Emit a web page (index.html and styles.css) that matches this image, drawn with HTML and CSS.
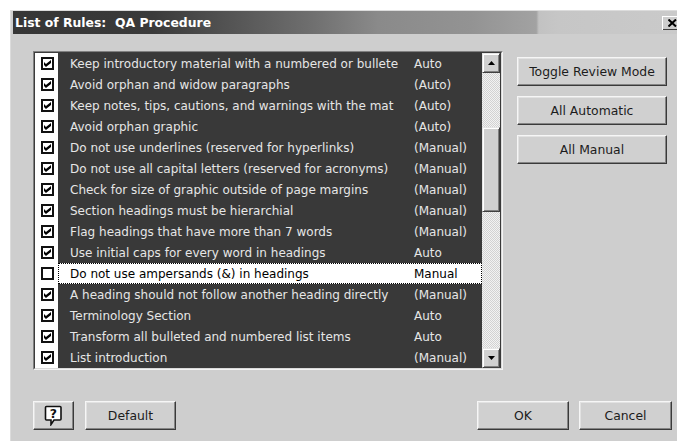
FILE: index.html
```html
<!DOCTYPE html>
<html lang="en">
<head>
<meta charset="utf-8">
<title>List of Rules: QA Procedure</title>
<link rel="stylesheet" href="styles.css">
</head>
<body>
<div class="window">
  <div class="titlebar">
    <span class="title">List of Rules:&nbsp; QA Procedure</span>
    <button class="close" aria-label="Close">
      <svg width="9" height="8" viewBox="0 0 9 8"><path d="M0.5 0.5 L8 7.5 M8 0.5 L0.5 7.5" stroke="#000" stroke-width="2" fill="none"/></svg>
    </button>
  </div>
  <div class="content">
    <div class="main">
      <div class="listbox">
        <div class="listbox-inner">
          <ul class="rows">
            <li class="row"><span class="cbcell"><span class="cb on"></span></span><div class="item"><span class="name">Keep introductory material with a numbered or bullete</span><span class="mode">Auto</span></div></li>
            <li class="row"><span class="cbcell"><span class="cb on"></span></span><div class="item"><span class="name">Avoid orphan and widow paragraphs</span><span class="mode">(Auto)</span></div></li>
            <li class="row"><span class="cbcell"><span class="cb on"></span></span><div class="item"><span class="name">Keep notes, tips, cautions, and warnings with the mat</span><span class="mode">(Auto)</span></div></li>
            <li class="row"><span class="cbcell"><span class="cb on"></span></span><div class="item"><span class="name">Avoid orphan graphic</span><span class="mode">(Auto)</span></div></li>
            <li class="row"><span class="cbcell"><span class="cb on"></span></span><div class="item"><span class="name">Do not use underlines (reserved for hyperlinks)</span><span class="mode">(Manual)</span></div></li>
            <li class="row"><span class="cbcell"><span class="cb on"></span></span><div class="item"><span class="name">Do not use all capital letters (reserved for acronyms)</span><span class="mode">(Manual)</span></div></li>
            <li class="row"><span class="cbcell"><span class="cb on"></span></span><div class="item"><span class="name">Check for size of graphic outside of page margins</span><span class="mode">(Manual)</span></div></li>
            <li class="row"><span class="cbcell"><span class="cb on"></span></span><div class="item"><span class="name">Section headings must be hierarchial</span><span class="mode">(Manual)</span></div></li>
            <li class="row"><span class="cbcell"><span class="cb on"></span></span><div class="item"><span class="name">Flag headings that have more than 7 words</span><span class="mode">(Manual)</span></div></li>
            <li class="row"><span class="cbcell"><span class="cb on"></span></span><div class="item"><span class="name">Use initial caps for every word in headings</span><span class="mode">Auto</span></div></li>
            <li class="row selected"><span class="cbcell"><span class="cb"></span></span><div class="item"><span class="name">Do not use ampersands (&amp;) in headings</span><span class="mode">Manual</span></div></li>
            <li class="row"><span class="cbcell"><span class="cb on"></span></span><div class="item"><span class="name">A heading should not follow another heading directly</span><span class="mode">(Manual)</span></div></li>
            <li class="row"><span class="cbcell"><span class="cb on"></span></span><div class="item"><span class="name">Terminology Section</span><span class="mode">Auto</span></div></li>
            <li class="row"><span class="cbcell"><span class="cb on"></span></span><div class="item"><span class="name">Transform all bulleted and numbered list items</span><span class="mode">Auto</span></div></li>
            <li class="row"><span class="cbcell"><span class="cb on"></span></span><div class="item"><span class="name">List introduction</span><span class="mode">(Manual)</span></div></li>
          </ul>
          <div class="scrollbar">
            <div class="sb-btn">
              <svg width="7" height="4" viewBox="0 0 7 4"><path d="M3.5 0 L7 4 L0 4 Z" fill="#000"/></svg>
            </div>
            <div class="sb-track">
              <div class="sb-thumb"></div>
            </div>
            <div class="sb-btn">
              <svg width="7" height="4" viewBox="0 0 7 4"><path d="M0 0 L7 0 L3.5 4 Z" fill="#000"/></svg>
            </div>
          </div>
        </div>
      </div>
      <div class="side">
        <button class="btn wide">Toggle Review Mode</button>
        <button class="btn wide">All Automatic</button>
        <button class="btn wide">All Manual</button>
      </div>
    </div>
    <div class="footer">
      <button class="btn help" aria-label="Help">
        <svg width="19" height="21" viewBox="0 0 19 21">
          <path d="M2.5 1.5 H16 Q17 1.5 17 2.5 V14 Q17 15 16 15 H10 L7 19.5 L7 15 H2.5 Q1.5 15 1.5 14 V2.5 Q1.5 1.5 2.5 1.5 Z" fill="#fff" stroke="#111" stroke-width="1.6"/>
          <text x="9.3" y="13" text-anchor="middle" class="help-q">?</text>
        </svg>
      </button>
      <button class="btn default">Default</button>
      <span class="spacer"></span>
      <button class="btn ok">OK</button>
      <button class="btn cancel">Cancel</button>
    </div>
  </div>
</div>
</body>
</html>
```

FILE: styles.css
```css
html, body {
  margin: 0;
  padding: 0;
  background: #fff;
  overflow: hidden;
}

body {
  font-family: "DejaVu Sans", "Liberation Sans", sans-serif;
  font-size: 12px;
}

/* dialog frame */
.window {
  margin: 10px 0 0 10px;
  height: 431px;
  box-sizing: border-box;
  border-top: 1px solid #dcdcdc;
  border-left: 1px solid #dcdcdc;
  padding-left: 2px;
  background: #cecece;
  overflow: hidden;
}

.titlebar {
  height: 23px;
  display: flex;
  align-items: center;
  padding-left: 2px;
  background: linear-gradient(90deg,
    #363636 0%, #3a3a3a 21%, #6f6f6f 45%, #8a8a8a 55%,
    #939393 69%, #a2a2a2 78.8%, #c2c2c2 79.2%, #c6c6c6 82%, #cacaca 100%);
}

.title {
  color: #fff;
  font-weight: bold;
  font-size: 12.4px;
  white-space: nowrap;
}

.close {
  margin-left: auto;
  width: 15px;
  height: 14px;
  padding: 0 0 0 5px;
  display: flex;
  align-items: center;
  justify-content: flex-start;
  background: #cdcdcd;
  border: none;
  border-left: 1px solid #fff;
  border-top: 1px solid #fff;
  box-shadow: inset 0 -1px #404040;
}

.content {
  padding: 17px 0 0 20px;
}

.main {
  display: flex;
  align-items: flex-start;
}

/* sunken list box */
.listbox {
  width: 470px;
  height: 319px;
  box-sizing: border-box;
  border: 1px solid;
  border-color: #808080 #f4f4f4 #f4f4f4 #808080;
}

.listbox-inner {
  height: 100%;
  box-sizing: border-box;
  border: 1px solid;
  border-color: #3c3c3c #dadada #dadada #3c3c3c;
  display: flex;
  background: #393939;
}

.rows {
  list-style: none;
  margin: 0;
  padding: 0;
  width: 447px;
}

.row {
  height: 21px;
  display: flex;
  align-items: stretch;
}

.cbcell {
  width: 23px;
  flex: none;
  background: #fff;
  display: flex;
  align-items: center;
  padding-left: 6px;
  box-sizing: border-box;
}

.cb {
  width: 13px;
  height: 13px;
  box-sizing: border-box;
  border: 2px solid #111;
  background: #fff;
  display: block;
  position: relative;
}

/* check mark */
.cb.on::after {
  content: "";
  position: absolute;
  left: 1px;
  top: 1px;
  width: 7px;
  height: 7px;
  background: #000;
  clip-path: polygon(0 28%, 28% 57%, 100% 0, 100% 43%, 28% 100%, 0 71%);
}

.item {
  flex: 1;
  display: flex;
  align-items: center;
  color: #e6e6e6;
  min-width: 0;
}

.name {
  flex: 1;
  padding-left: 12px;
  white-space: nowrap;
  overflow: hidden;
}

.mode {
  width: 68px;
  flex: none;
  white-space: nowrap;
}

.row.selected .item {
  background: #fff;
  color: #000;
  outline: 1px dotted #000;
  outline-offset: -1px;
}

/* vertical scroll bar */
.scrollbar {
  width: 18px;
  flex: none;
  display: flex;
  flex-direction: column;
  background: repeating-conic-gradient(#d2d2d2 0 25%, #f2f2f2 0 50%) 0 0 / 2px 2px;
}

.sb-btn {
  height: 20px;
  flex: none;
  box-sizing: border-box;
  display: flex;
  align-items: center;
  justify-content: center;
  background: #d0d0d0;
  border: 1px solid;
  border-color: #e6e6e6 #404040 #404040 #e6e6e6;
  box-shadow: inset 1px 1px #fff, inset -1px -1px #808080;
}

.sb-track {
  flex: 1;
}

.sb-thumb {
  margin-top: 54px;
  height: 85px;
  box-sizing: border-box;
  background: #d0d0d0;
  border: 1px solid;
  border-color: #e6e6e6 #404040 #404040 #e6e6e6;
  box-shadow: inset 1px 1px #fff, inset -1px -1px #808080;
}

/* push buttons */
.btn {
  font-family: "DejaVu Sans", "Liberation Sans", sans-serif;
  font-size: 12.4px;
  color: #1c1c1c;
  height: 29px;
  padding: 0;
  box-sizing: border-box;
  background: #d0d0d0;
  border: 1px solid;
  border-color: #f6f6f6 #3a3a3a #3a3a3a #f6f6f6;
  box-shadow: inset -1px -1px #858585, inset 1px 1px #e2e2e2;
  display: flex;
  align-items: center;
  justify-content: center;
}

.side {
  margin: 6px 0 0 14px;
  display: flex;
  flex-direction: column;
  gap: 10px;
}

.btn.wide {
  width: 150px;
}

.footer {
  margin-top: 31px;
  padding-right: 5px;
  display: flex;
  align-items: center;
}

.btn.help {
  width: 41px;
}

.help-q {
  font-family: "DejaVu Sans", sans-serif;
  font-weight: bold;
  font-size: 12.5px;
  fill: #111;
}

.btn.default {
  width: 91px;
  margin-left: 11px;
}

.spacer {
  flex: 1;
}

.btn.ok {
  width: 92px;
}

.btn.cancel {
  width: 93px;
  margin-left: 10px;
}
```
